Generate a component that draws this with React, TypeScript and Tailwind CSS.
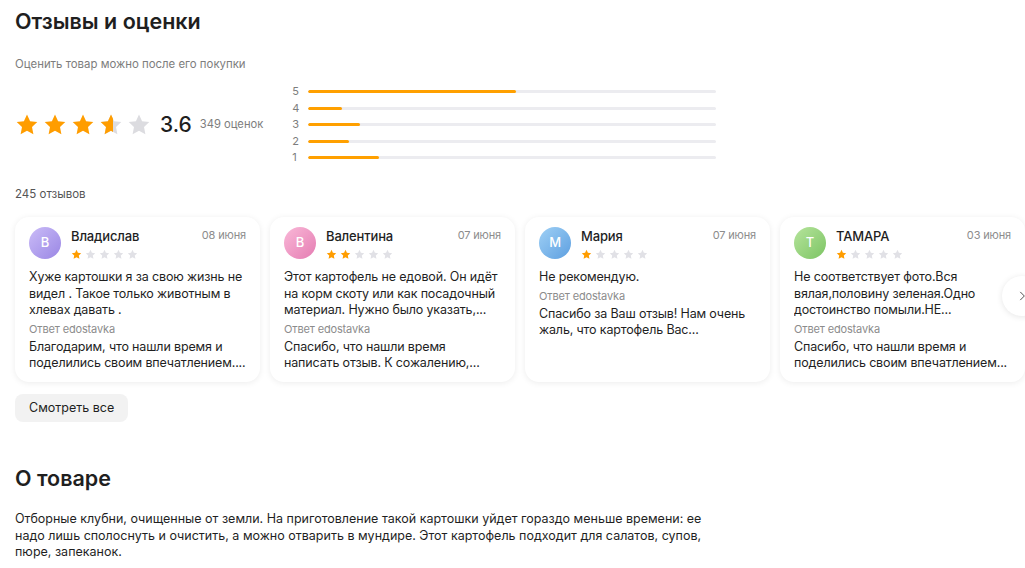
const reviews = [
  {
    name: "Владислав",
    letter: "В",
    date: "08 июня",
    rating: 1,
    avatar: "bg-gradient-to-br from-[#cbbcf7] to-[#9a86e4]",
    text: "Хуже картошки я за свою жизнь не видел . Такое только животным в хлевах давать .",
    reply: "Благодарим, что нашли время и поделились своим впечатлением....",
  },
  {
    name: "Валентина",
    letter: "В",
    date: "07 июня",
    rating: 2,
    avatar: "bg-gradient-to-br from-[#f9b8d8] to-[#e47cb2]",
    text: "Этот картофель не едовой. Он идёт на корм скоту или как посадочный материал. Нужно было указать,...",
    reply: "Спасибо, что нашли время написать отзыв. К сожалению,...",
  },
  {
    name: "Мария",
    letter: "М",
    date: "07 июня",
    rating: 1,
    avatar: "bg-gradient-to-br from-[#9fd0f5] to-[#5d9fe0]",
    text: "Не рекомендую.",
    reply: "Спасибо за Ваш отзыв! Нам очень жаль, что картофель Вас...",
  },
  {
    name: "ТАМАРА",
    letter: "Т",
    date: "03 июня",
    rating: 1,
    avatar: "bg-gradient-to-br from-[#b6e49c] to-[#7cc463]",
    text: "Не соответствует фото.Вся вялая,половину зеленая.Одно достоинство помыли.НЕ...",
    reply: "Спасибо, что нашли время и поделились своим впечатлением...",
  },
];

const bars = [
  { label: "5", pct: 51 },
  { label: "4", pct: 8.3 },
  { label: "3", pct: 12.7 },
  { label: "2", pct: 10 },
  { label: "1", pct: 17.4 },
];

function Star({ className }: { className: string }) {
  return (
    <svg viewBox="0 0 24 24" className={className} fill="currentColor">
      <path d="M12 1.6l3.1 6.6 7.2.9-5.3 5 1.4 7.2L12 17.8l-6.4 3.5 1.4-7.2-5.3-5 7.2-.9z" />
    </svg>
  );
}

function SmallStars({ rating }: { rating: number }) {
  return (
    <div className="flex gap-[3px]">
      {[1, 2, 3, 4, 5].map((i) => (
        <Star
          key={i}
          className={`w-[11px] h-[11px] ${i <= rating ? "text-[#ff9d00]" : "text-[#e1e1e6]"}`}
        />
      ))}
    </div>
  );
}

function ReviewCard({ r }: { r: (typeof reviews)[number] }) {
  return (
    <div className="w-[245px] h-[165px] shrink-0 rounded-[14px] bg-white shadow-[0_1px_6px_rgba(0,0,0,0.08)] px-[14px] pt-[10px] tracking-[-0.15px]">
      <div className="flex items-start gap-[10px]">
        <div
          className={`w-[32px] h-[32px] rounded-full ${r.avatar} flex items-center justify-center text-white text-[13px] font-medium`}
        >
          {r.letter}
        </div>
        <div className="flex-1 pt-[1px]">
          <div className="flex items-start justify-between">
            <span className="text-[13px] font-medium leading-[16px] text-[#1f1f1f]">{r.name}</span>
            <span className="text-[11px] leading-[14px] text-[#8c8c8c]">{r.date}</span>
          </div>
          <div className="mt-[5px]">
            <SmallStars rating={r.rating} />
          </div>
        </div>
      </div>
      <p className="mt-[9px] text-[12.5px] leading-[16.5px] text-[#1f1f1f] line-clamp-3">{r.text}</p>
      <div className="mt-[3px] text-[11px] leading-[14px] text-[#8c8c8c]">Ответ edostavka</div>
      <p className="mt-[3px] text-[12.5px] leading-[16px] text-[#1f1f1f] line-clamp-2">{r.reply}</p>
    </div>
  );
}

export default function App() {
  return (
    <div className="min-h-[568px] bg-white px-[15px] pt-[8px] font-['Inter',sans-serif] text-[#1f1f1f] overflow-hidden">
      {/* Reviews header */}
      <h2 className="text-[21.5px] font-semibold leading-[26px]">Отзывы и оценки</h2>
      <p className="mt-[23px] text-[11.4px] leading-[14px] text-[#7d7d7d]">Оценить товар можно после его покупки</p>

      {/* Rating summary */}
      <div className="mt-[15px] flex items-center">
        <div className="flex items-center">
          <div className="flex gap-[4px]">
            {[1, 2, 3].map((i) => (
              <Star key={i} className="w-[24px] h-[24px] text-[#ff9d00]" />
            ))}
            <div className="relative w-[24px] h-[24px]">
              <Star className="absolute inset-0 w-[24px] h-[24px] text-[#dcdce0]" />
              <div className="absolute inset-y-0 left-0 w-[14px] overflow-hidden">
                <Star className="w-[24px] h-[24px] text-[#ff9d00]" />
              </div>
            </div>
            <Star className="w-[24px] h-[24px] text-[#dcdce0]" />
          </div>
          <span className="ml-[9px] text-[21px] font-medium leading-[26px]">3.6</span>
          <span className="ml-[8px] text-[11.2px] text-[#7d7d7d]">349 оценок</span>
        </div>
        <div className="ml-[29px] w-[424px] flex flex-col gap-[5.5px]">
          {bars.map((b) => (
            <div key={b.label} className="flex items-center h-[11px]">
              <span className="w-[16px] text-[11px] leading-[11px] text-[#7d7d7d]">{b.label}</span>
              <div className="flex-1 h-[3px] rounded-full bg-[#ececf0] overflow-hidden">
                <div className="h-full rounded-full bg-[#ffa000]" style={{ width: `${b.pct}%` }} />
              </div>
            </div>
          ))}
        </div>
      </div>

      <p className="mt-[24px] text-[11.5px] leading-[14px] text-[#555]">245 отзывов</p>

      {/* Review cards */}
      <div className="relative mt-[14px] -mx-[15px] px-[15px] py-[2px]">
        <div className="flex gap-[10px]">
          {reviews.map((r) => (
            <ReviewCard key={r.name} r={r} />
          ))}
        </div>
        <button className="absolute left-[1002px] top-[61px] w-[40px] h-[40px] rounded-full bg-white shadow-[0_1px_6px_rgba(0,0,0,0.1)] flex items-center pl-[13px]">
          <svg viewBox="0 0 24 24" className="w-[14px] h-[14px] text-[#444]" fill="none" stroke="currentColor" strokeWidth="1.6">
            <path d="M9 5l7 7-7 7" />
          </svg>
        </button>
      </div>

      <button className="mt-[10px] h-[28px] px-[14px] rounded-[8px] bg-[#f2f2f2] text-[12.5px] text-[#1f1f1f]">
        Смотреть все
      </button>

      {/* About */}
      <h2 className="mt-[43px] text-[21.5px] font-semibold leading-[26px]">О товаре</h2>
      <p className="mt-[20px] max-w-[700px] text-[12.5px] leading-[16.5px] text-[#1f1f1f]">
        Отборные клубни, очищенные от земли. На приготовление такой картошки уйдет гораздо меньше времени: ее надо лишь сполоснуть и очистить, а можно отварить в мундире. Этот картофель подходит для салатов, супов, пюре, запеканок.
      </p>
    </div>
  );
}
